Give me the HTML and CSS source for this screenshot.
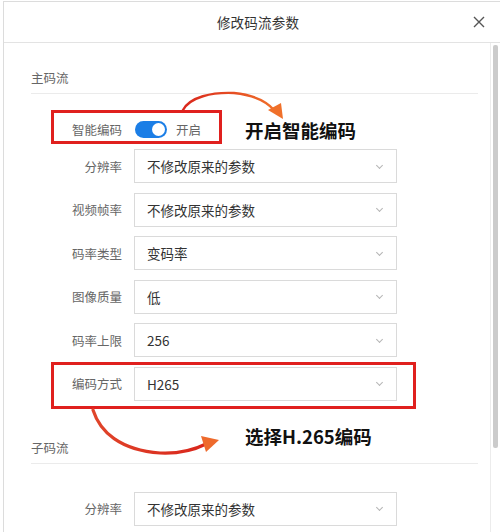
FILE: index.html
```html
<!DOCTYPE html>
<html lang="zh-CN">
<head>
<meta charset="utf-8">
<title>修改码流参数</title>
<link rel="stylesheet" href="styles.css">
</head>
<body>
<div class="stage">
  <div class="dialog">
    <div class="header">
      <span class="title">修改码流参数</span>
      <span class="close"><svg width="12" height="12" viewBox="0 0 12 12"><path d="M1 1L11 11M11 1L1 11" stroke="#555" stroke-width="1.4" fill="none"/></svg></span>
    </div>
    <div class="body">
      <div class="content">
        <div class="section-title">主码流</div>
        <div class="form main-form">
          <div class="row toggle-row">
            <span class="label">智能编码</span>
            <span class="switch"><span class="knob"></span></span>
            <span class="switch-text">开启</span>
          </div>
          <div class="row select-row"><span class="label">分辨率</span><div class="select"><span>不修改原来的参数</span><i class="chev"></i></div></div>
          <div class="row select-row"><span class="label">视频帧率</span><div class="select"><span>不修改原来的参数</span><i class="chev"></i></div></div>
          <div class="row select-row"><span class="label">码率类型</span><div class="select"><span>变码率</span><i class="chev"></i></div></div>
          <div class="row select-row"><span class="label">图像质量</span><div class="select"><span>低</span><i class="chev"></i></div></div>
          <div class="row select-row"><span class="label">码率上限</span><div class="select"><span>256</span><i class="chev"></i></div></div>
          <div class="row select-row"><span class="label">编码方式</span><div class="select"><span>H265</span><i class="chev"></i></div></div>
        </div>
        <div class="section-title sub-title">子码流</div>
        <div class="form sub-form">
          <div class="row select-row"><span class="label">分辨率</span><div class="select"><span>不修改原来的参数</span><i class="chev"></i></div></div>
        </div>
      </div>
      <div class="scrollbar"><div class="thumb"></div></div>
    </div>
  </div>

  <div class="overlay">
    <svg class="marks" width="500" height="532" viewBox="0 0 500 532">
      <defs>
        <linearGradient id="g1" x1="0" y1="0" x2="1" y2="0">
          <stop offset="0" stop-color="#d9261c"/>
          <stop offset="1" stop-color="#f0702a"/>
        </linearGradient>
        <linearGradient id="g2" x1="0" y1="0" x2="1" y2="0">
          <stop offset="0" stop-color="#e0452a"/>
          <stop offset="1" stop-color="#d9261c"/>
        </linearGradient>
      </defs>
      <rect x="52.5" y="111.5" width="168" height="31" fill="none" stroke="#e0201e" stroke-width="3"/>
      <rect x="52.5" y="363.5" width="362" height="44" fill="none" stroke="#e0201e" stroke-width="3"/>
      <path d="M183 110 C190 97 212 92 234 93 C254 95 267 102 274 110" fill="none" stroke="url(#g1)" stroke-width="2.4" stroke-linecap="round"/>
      <path d="M268 110 L283 119 L281 103 Z" fill="#f0702a"/>
      <path d="M93 410 C100 432 120 450 160 453 C182 454 196 449 206 444" fill="none" stroke="url(#g2)" stroke-width="3.2" stroke-linecap="round"/>
      <path d="M201 436 L219 440 L206 452 Z" fill="#ee6a2c"/>
    </svg>
    <div class="note note1">开启智能编码</div>
    <div class="note note2">选择H.265编码</div>
  </div>
</div>
</body>
</html>
```

FILE: styles.css
```css
html, body {
  margin: 0;
  padding: 0;
  background: #ffffff;
}

body {
  font-family: "Noto Sans CJK SC", "Noto Sans", sans-serif;
  color: #333;
}

.stage {
  position: relative;
  width: 500px;
  height: 532px;
  overflow: hidden;
}

.dialog {
  margin: 1px 0 0 3px;
  width: 510px;
  height: 560px;
  border: 1px solid #dcdcdc;
  background: #fff;
  box-sizing: border-box;
}

.header {
  height: 40px;
  border-bottom: 1px solid #e3e3e3;
  display: flex;
  align-items: center;
  justify-content: center;
  position: relative;
}

.title {
  font-size: 13.5px;
  color: #333;
  letter-spacing: 0.2px;
}

.close {
  position: absolute;
  left: 469px;
  top: 14px;
  width: 12px;
  height: 12px;
  display: flex;
}

.body {
  display: flex;
  height: 500px;
}

.content {
  width: 459px;
  padding-left: 27px;
  box-sizing: content-box;
}

.section-title {
  font-size: 12.5px;
  line-height: 20px;
  color: #666;
  padding: 25px 0 5px 0;
  border-bottom: 1px solid #ebebeb;
  width: 447px;
}

.sub-title {
  padding-top: 37px;
}

.form {
  display: flex;
  flex-direction: column;
}

.main-form {
  padding-top: 18px;
}

.sub-form {
  padding-top: 28px;
}

.row {
  display: flex;
  align-items: center;
  height: 34px;
}

.toggle-row {
  margin-bottom: 3px;
}

.select-row + .select-row {
  margin-top: 9.6px;
}

.label {
  width: 91px;
  text-align: right;
  font-size: 12.5px;
  color: #666;
  margin-right: 12px;
  flex: none;
}

.switch {
  width: 32px;
  height: 17px;
  border-radius: 9px;
  background: #1b7ee6;
  position: relative;
  margin-left: 1px;
  flex: none;
}

.knob {
  position: absolute;
  right: 2px;
  top: 2px;
  width: 13px;
  height: 13px;
  border-radius: 50%;
  background: #fff;
}

.switch-text {
  font-size: 12.5px;
  color: #666;
  margin-left: 9px;
}

.select {
  width: 263px;
  height: 34px;
  border: 1px solid #dadada;
  box-sizing: border-box;
  display: flex;
  align-items: center;
  justify-content: space-between;
  padding: 0 14px 0 12px;
  font-size: 13.5px;
  color: #333;
}

.chev {
  width: 4px;
  height: 4px;
  border-right: 1px solid #b5b5b5;
  border-bottom: 1px solid #b5b5b5;
  transform: rotate(45deg);
  margin-top: -2px;
}

.scrollbar {
  width: 8px;
  border-left: 1px solid #ececec;
  padding: 2px 1px 0 2px;
  flex: none;
}

.thumb {
  width: 5px;
  height: 403px;
  background: #cbcbcb;
  border-radius: 2px;
}

.overlay {
  position: absolute;
  left: 0;
  top: 0;
  width: 500px;
  height: 532px;
  pointer-events: none;
}

.marks {
  position: absolute;
  left: 0;
  top: 0;
}

.note {
  position: absolute;
  left: 245px;
  font-size: 18.5px;
  font-weight: 700;
  color: #111;
  line-height: 24px;
  white-space: nowrap;
}

.note1 {
  top: 118px;
}

.note2 {
  top: 424px;
}
```
